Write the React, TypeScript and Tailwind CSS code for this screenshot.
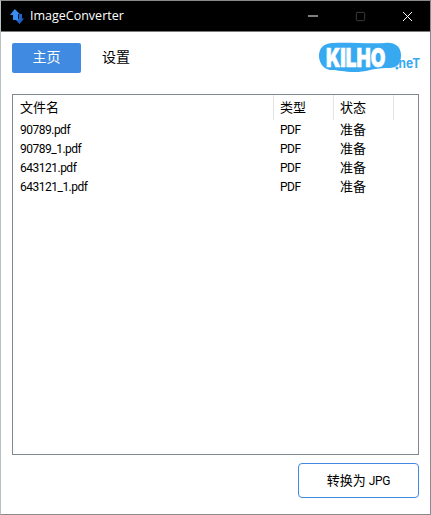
import { Minus, Square, X } from "lucide-react";

const files = [
  { name: "90789.pdf", type: "PDF", status: "准备" },
  { name: "90789_1.pdf", type: "PDF", status: "准备" },
  { name: "643121.pdf", type: "PDF", status: "准备" },
  { name: "643121_1.pdf", type: "PDF", status: "准备" },
];

const fontStack = "font-['Roboto','Noto_Sans_CJK_SC',sans-serif]";

function AppIcon() {
  return (
    <svg width="14" height="15" viewBox="0 0 14 15">
      <path d="M9 5 L12 5 L12 9.5 L14 9.5 L9.5 15 L5 10 L9 10 Z" fill="#1d62c8" />
      <path d="M4.8 0 L9.8 5 L8.2 5 L8.2 11 L3 11 L3 6 L0 6 Z" fill="#3a8cf0" />
    </svg>
  );
}

function Logo() {
  return (
    <svg width="106" height="32" viewBox="0 0 106 32">
      <path
        d="M14 1 C28 0 50 2 66 1 C76 0 82 5 82 13 C82 22 78 26 70 26 C56 25 46 31 32 30 C22 29 16 28 11 28 C4 27 0 20 0 14 C0 6 5 1 14 1 Z"
        fill="#36a9f0"
      />
      <text transform="translate(7 25) scale(0.9 1.22)" fontFamily="Inter, sans-serif" fontWeight="900" fontSize="21" fill="#fff" stroke="#fff" strokeWidth="0.5">
        KILHO
      </text>
      <circle cx="78" cy="26" r="1.5" fill="#36a9f0" />
      <text transform="translate(79.5 25.5) scale(0.92 1)" fontFamily="Inter, sans-serif" fontWeight="700" fontSize="13" fill="#36a9f0">
        neT
      </text>
    </svg>
  );
}

export default function App() {
  return (
    <div className={`${fontStack} w-[431px] h-[515px] flex flex-col bg-white border-t border-r border-b border-l border-t-[#8a8a8a] border-r-[#8a8a8a] border-b-[#8a8a8a] border-l-[#b8c0c8] text-black overflow-hidden`}>
      {/* title bar */}
      <div className="h-[30px] shrink-0 bg-black border-b border-[#7a7a7a] box-content flex items-center text-white">
        <div className="ml-[9px] mr-[6px] flex">
          <AppIcon />
        </div>
        <span className="text-[12.5px] leading-none font-['Open_Sans',sans-serif]">ImageConverter</span>
        <div className="ml-auto flex items-center">
          <div className="w-[46px] flex justify-center">
            <Minus size={16} strokeWidth={1} absoluteStrokeWidth />
          </div>
          <div className="w-[46px] ml-[1px] flex justify-center text-[#3c3c3c]">
            <Square size={11} strokeWidth={1} absoluteStrokeWidth />
          </div>
          <div className="w-[46px] ml-[1px] flex justify-center">
            <X size={17} strokeWidth={1} absoluteStrokeWidth />
          </div>
        </div>
      </div>

      {/* nav */}
      <div className="flex items-start pl-[11px] pr-[5px] pt-[11px] h-[62px] shrink-0">
        <button className="w-[69px] h-[30px] pb-[2px] rounded-[2px] bg-[#418ae2] text-white text-[14px] leading-none">主页</button>
        <button className="w-[70px] h-[30px] pb-[2px] text-[14px] leading-none">设置</button>
        <div className="ml-auto -mt-[1px]">
          <Logo />
        </div>
      </div>

      {/* file table */}
      <div className="mx-[11px] h-[361px] shrink-0 border border-[#828790]">
        <div className="flex h-[25px] text-[13px]">
          <div className="w-[261px] pl-[7px] border-r border-[#e5e5e5] leading-[25px]">文件名</div>
          <div className="w-[60px] pl-[6px] border-r border-[#e5e5e5] leading-[25px]">类型</div>
          <div className="w-[60px] pl-[6px] border-r border-[#e5e5e5] leading-[25px]">状态</div>
        </div>
        <div className="flex flex-col text-[12px] tracking-[-0.5px]">
          {files.map((f) => (
            <div key={f.name} className="flex h-[19px] items-center">
              <div className="w-[261px] pl-[7px]">{f.name}</div>
              <div className="w-[60px] pl-[6px]">{f.type}</div>
              <div className="w-[60px] pl-[6px] text-[13px] tracking-normal leading-[16px]">{f.status}</div>
            </div>
          ))}
        </div>
      </div>

      {/* action */}
      <div className="flex justify-end pr-[11px] pt-[8px]">
        <button className="w-[121px] h-[35px] rounded-[4px] border border-[#418ae2] bg-white text-[13px] leading-none">
          转换为<span className="ml-[3px] text-[12px] tracking-[-0.3px]">JPG</span>
        </button>
      </div>
    </div>
  );
}
